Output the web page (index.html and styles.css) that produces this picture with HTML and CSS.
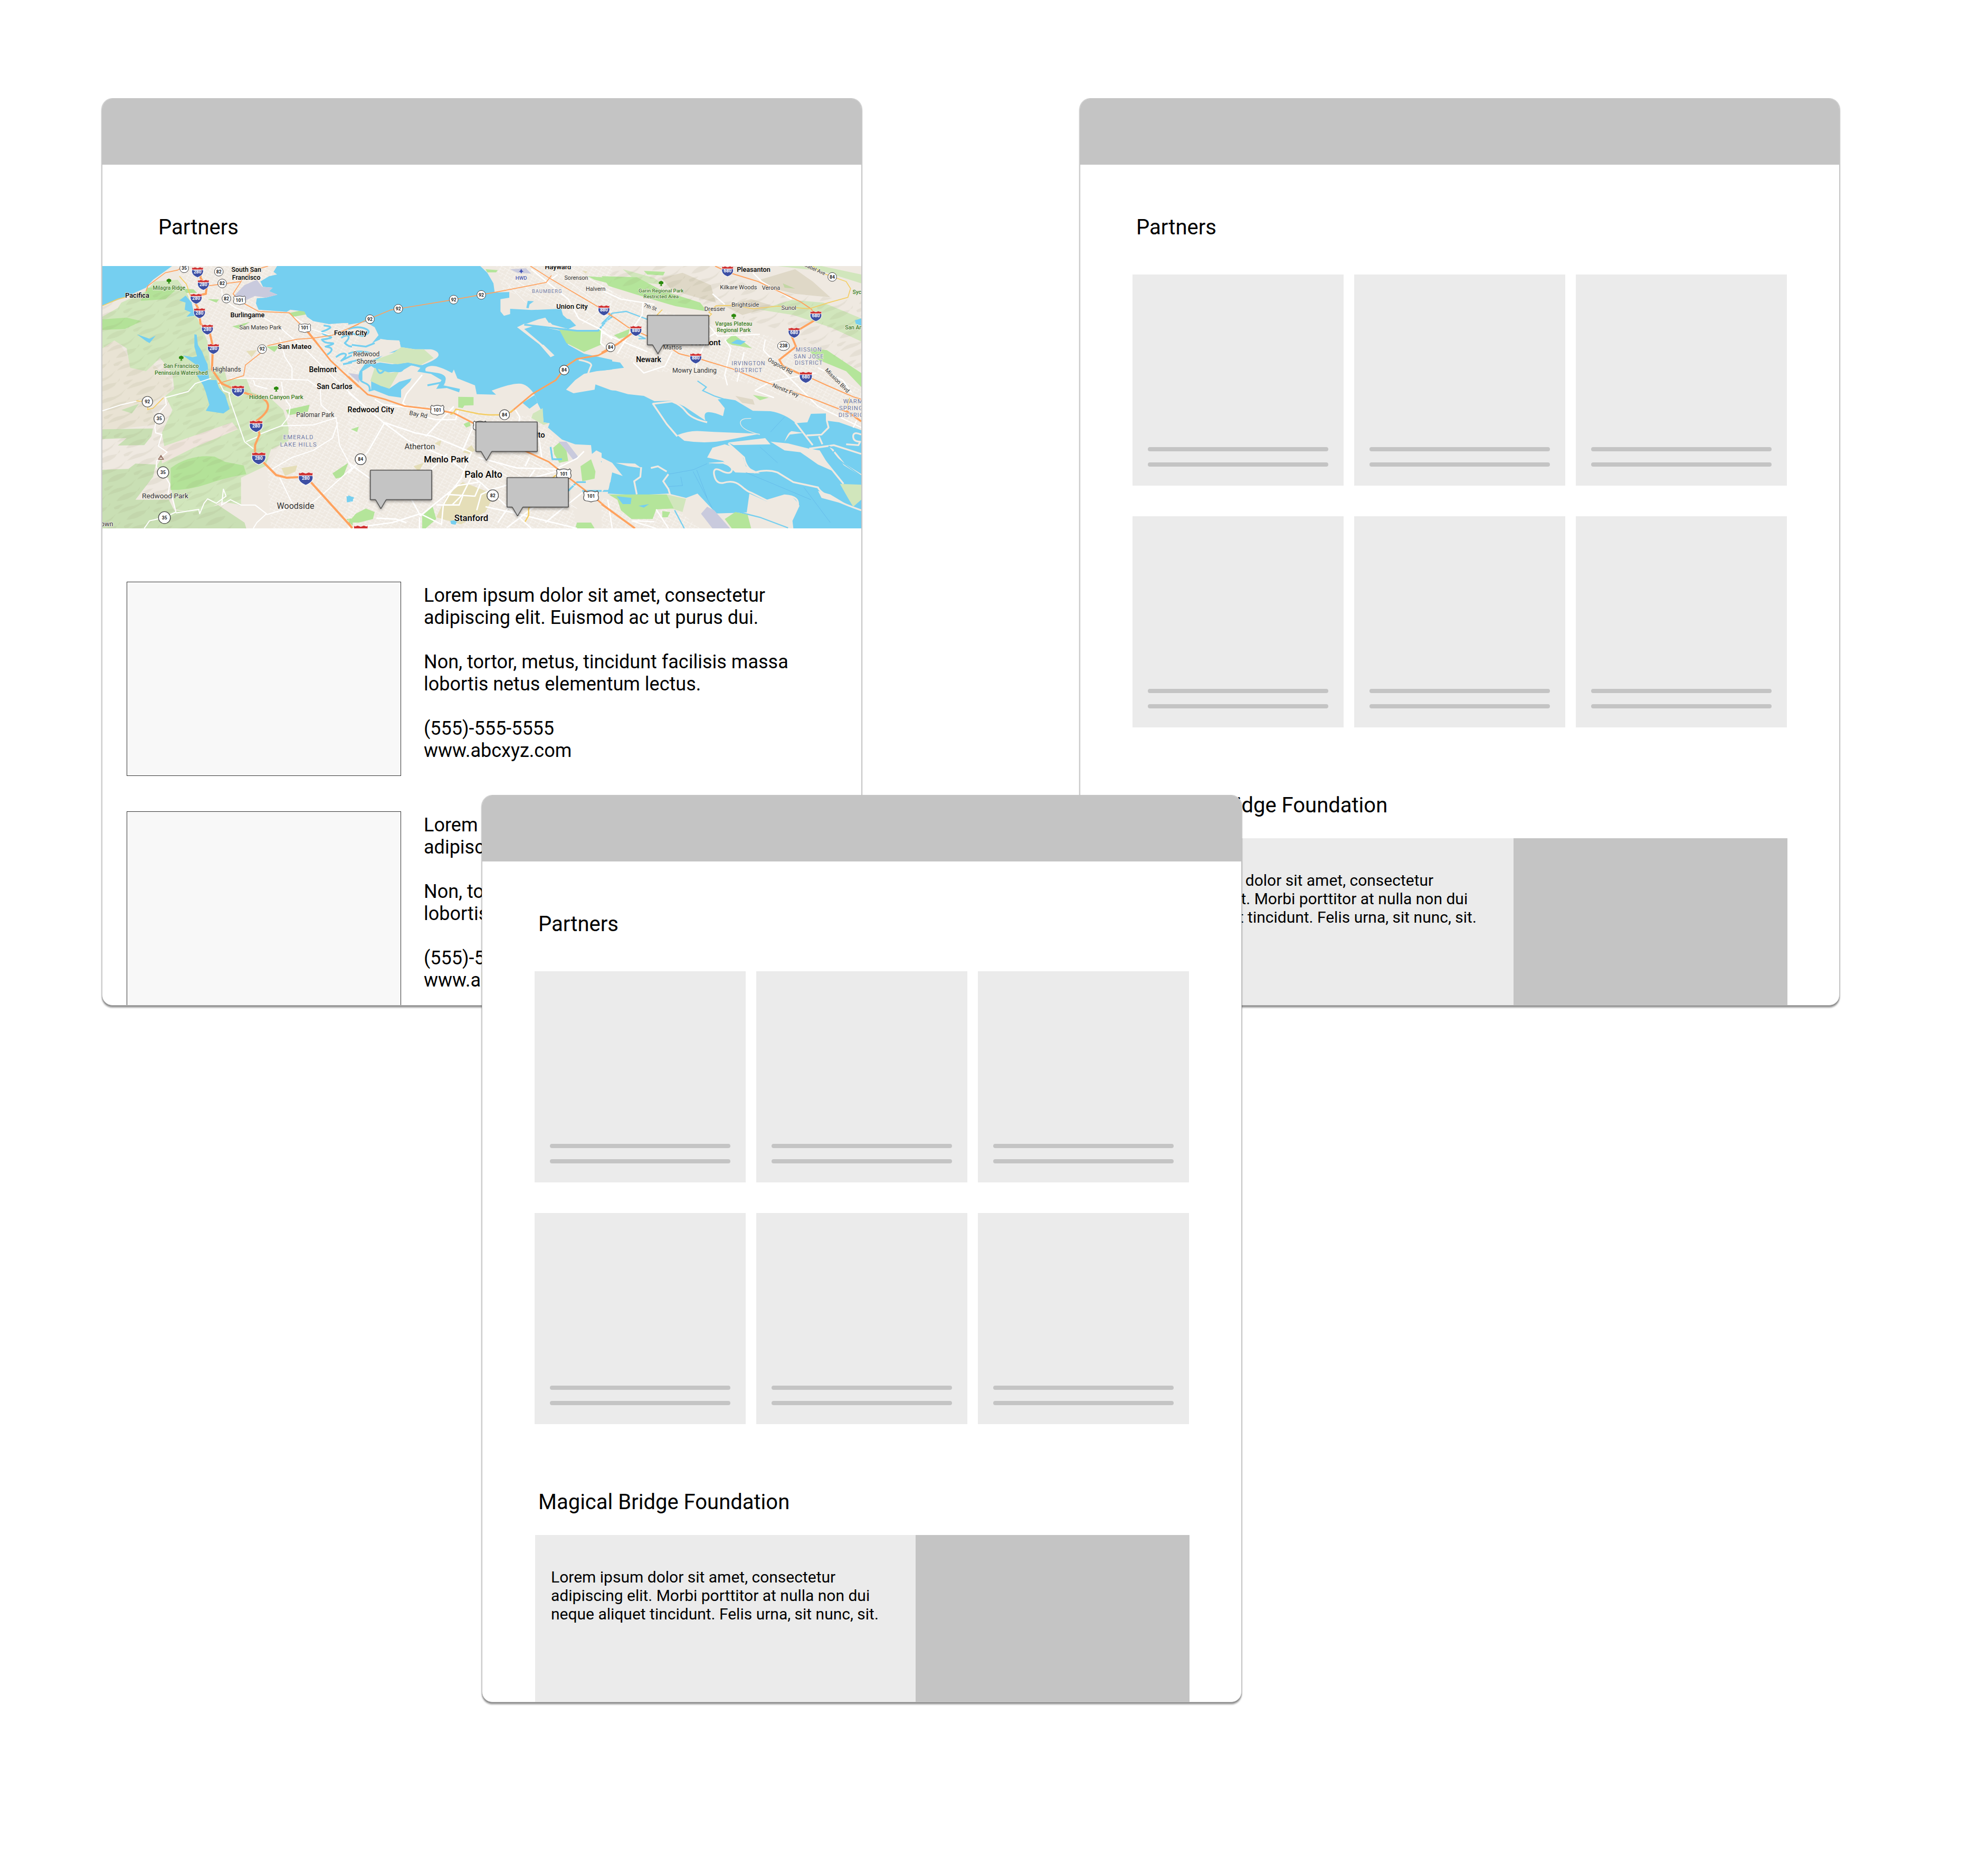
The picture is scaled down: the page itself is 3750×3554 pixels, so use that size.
FILE: index.html
```html
<!DOCTYPE html>
<html lang="en">
<head>
<meta charset="utf-8">
<title>Partners wireframes</title>
<link rel="stylesheet" href="styles.css">
</head>
<body>
<main class="canvas">

<article class="frame frame-map">
  <header class="bar"></header>
  <h1 class="title">Partners</h1>
  <svg class="map" viewBox="0 0 4314 1491" role="img" aria-label="Map of partner locations">
    <defs>
      <pattern id="streets" width="46" height="34" patternUnits="userSpaceOnUse" patternTransform="rotate(28)">
        <path d="M0 4H46M0 21H30M8 0V34M31 0V21" fill="none" stroke="#fff" stroke-width="2" opacity=".7"/>
      </pattern>
      <pattern id="hills" width="190" height="120" patternUnits="userSpaceOnUse" patternTransform="rotate(-28)">
        <path d="M0 20Q50 0 90 18T190 14L150 34Q90 42 50 30ZM30 74Q80 50 130 70T185 66L140 90Q80 98 30 74ZM-20 104Q20 90 60 108L20 118Z" fill="#8b8a62" opacity=".1"/>
      </pattern>
      <g id="interstate">
        <path d="M-32-9H32C37 12 22 27 0 35C-22 27-37 12-32-9Z" fill="#3d4fa3" stroke="#fff" stroke-width="3"/>
        <path d="M-32-9V-24L-26-20L-14-24L0-19L14-24L26-20L32-24V-9Z" fill="#cf3030" stroke="#fff" stroke-width="2"/>
      </g>
      <path id="us" d="M-28-24Q-20-16-12-22Q0-25 12-22Q20-16 28-24L34-16Q29-6 34 4Q36 18 24 21Q10 22 0 26Q-10 22-24 21Q-36 18-34 4Q-29-6-34-16Z" fill="#fff" stroke="#444" stroke-width="3"/>
      <circle id="state" r="25" fill="#fff" stroke="#444" stroke-width="3"/>
      <path id="tree" d="M-3 14V5Q-14 8-13-1Q-14-9-5-10Q0-16 6-10Q15-9 13 0Q14 8 4 5V14H7V16H-7V14Z" fill="#2b8a0d"/>
      <path id="callout" d="M0 0H349V168H90L60 219L30 168H0Z" fill="#c4c4c4" stroke="#000" stroke-width="3"/>
    </defs>
    <rect width="4314" height="1491" fill="#efe9e1"/>

    <g transform="translate(-42 -42)">
      <path fill="url(#streets)" d="M460 42H1010L1000 280L1240 350L1500 380V1540H1000L980 1200L1100 1000L1080 800L780 700L640 500L520 190Z"/>
      <path fill="#e9e3d4" d="M42 480L120 450L190 560L330 600L440 700L430 760L300 830L370 940L42 980Z"/>
      <path fill="#d1e6bc" d="M150 250L290 185L340 130L470 120L520 190L560 290L600 380L640 470L660 640L730 610L750 690L860 680L890 760L1000 795L1070 860L1100 960V1035L1000 1085L970 1178L830 1245L830 1400L720 1380L600 1450L460 1425L420 1250L350 1180L400 1100L380 990L440 860L400 780L450 740L440 650L370 565L290 640L200 620L180 510L110 465L42 510V330L130 280Z"/>
      <path fill="#efe4dc" d="M380 1070L780 930L812 970L560 1075L380 1165Z"/>
      <path fill="#c9dfb4" d="M42 970L330 965L320 1010L280 1060L130 1062L180 1020L42 1025ZM42 1200L190 1195L230 1165L345 1170L330 1240L230 1370H420L450 1430L560 1440L700 1400L850 1500L860 1533H42ZM150 860L250 825L210 880Z"/>
      <path fill="#b3e298" d="M430 1190Q540 1110 680 1125L740 1155L845 1175L860 1225Q740 1245 640 1280T430 1315ZM42 345L180 335L265 355L170 400L42 405ZM300 165L480 160L400 230L260 240ZM1100 310L1190 290L1210 315L1130 330ZM1350 1220L1440 1160L1410 1240L1370 1250ZM1085 860L1220 830L1210 870L1100 890ZM780 385L880 360L820 400ZM975 500L1050 495L1020 530ZM640 230L705 232L690 250ZM500 170L560 175L580 195L520 195ZM1430 1480L1465 1475V1520Z"/>
      <path fill="#e5deb8" d="M1060 1190L1150 1175L1140 1210L1080 1235ZM860 525L920 520L890 560ZM1020 380L1060 375L1040 390Z"/>
      <path fill="url(#hills)" d="M42 270L340 140L520 190L600 380L660 640L890 760L1080 870L1060 1060L960 1170L830 1245V1400L720 1450L860 1533H42Z"/>
      <path fill="#75cff0" d="M42 42H438L400 70L330 120L290 165L180 215L100 245L42 267ZM1461 42H1035L1015 75L1035 90L990 100L940 130L955 160L1010 165L990 185L1037 205L970 222L920 225L915 255L930 290L1090 302L1110 290L1190 300L1205 330L1240 355L1330 372L1410 366L1500 365V42Z"/>
      <path fill="#c9cadd" d="M850 150L920 120L950 160L1010 165L990 185L1037 205L970 222L910 212L850 240L790 212Z"/>
      <path fill="#75cff0" d="M480 238L515 210L550 250L558 290L565 325L520 330L545 305L510 290L515 250ZM565 430L578 432L585 490L610 530L625 570L640 600L645 650L650 690L690 690L705 735L740 775L765 855L730 880L665 870L630 865L650 830L630 760L615 720L580 665L595 640L570 600L500 550L555 560L580 555L565 500ZM238 430L310 455L345 437L310 480L285 465ZM1430 1350L1470 1355L1465 1380L1432 1385Z"/>
      <g fill="none" stroke="#75cff0" stroke-width="10" stroke-linejoin="round"><path d="M1300 380Q1350 385 1335 395T1290 415Q1290 430 1330 440T1290 460Q1300 480 1340 480T1310 500Q1350 505 1345 520T1320 545M1400 450Q1430 430 1440 440T1420 480Q1440 500 1461 500M1370 560Q1400 535 1420 540T1400 580L1461 550M1410 600L1461 590"/></g>
      <g fill="none" stroke="#fff" stroke-width="6" stroke-linejoin="round">
        <path d="M42 865L150 830L260 805M660 680L570 710L530 755L400 790L405 830L370 870L350 900M350 910L340 960L345 990L380 1000L360 1065L410 1100L350 1150L350 1190M400 1240L425 1280L415 1340L440 1360L460 1440L395 1470L310 1490L280 1533M460 1445L590 1425L595 1450L620 1390L640 1365L690 1390L745 1350L730 1310L720 1400L770 1370L830 1400L910 1400L975 1450L920 1500L900 1533M975 1455L1130 1410L1050 1245M760 760L770 810L850 1040L900 1080M700 690L730 750L770 765M930 1000L1060 950L1240 945L1370 905M1000 1200L1120 1130L1240 1090L1350 1020L1380 930M860 1040L930 1010M900 690L910 720L980 740M1060 700L1070 780L1110 840L1100 900L1060 950M1370 900L1390 1060L1460 1190L1300 1335L1230 1390M770 680L890 680L1060 685L1210 690L1280 740L1285 830L1370 910M1050 450L1080 560L1120 620V690M720 170L725 230L800 280L950 330L1050 390L1200 520L1340 660L1500 810M1130 330L1230 400L1350 440"/>
      </g>
      <g fill="none" stroke="#ffa25e" stroke-width="5"><path d="M290 185L300 155L400 80L470 65L505 42M640 155L830 130L785 200L820 240L930 300L1105 308L1200 410L1340 580L1500 730M700 710L845 665L855 605L950 530M980 495L1150 458L1240 452L1350 435L1500 372M830 125L905 65L985 42"/></g>
      <path d="M1200 400L1340 580L1500 730" fill="none" stroke="#ffa25e" stroke-width="9"/>
      <g fill="none" stroke="#ffa25e" stroke-width="12" stroke-linejoin="round"><path d="M600 60V110L635 160L630 200L550 215L590 290L600 370L650 410L670 500L665 630L720 710L810 750L890 775Q975 790 983 830T920 920L935 1000L910 1060V1110M940 1140L1030 1230L1090 1245L1200 1240L1465 1533"/></g>
      <path d="M480 100L520 145L545 220M42 268L130 230L170 220M235 808L300 812V858L330 850L390 790" fill="none" stroke="#f4cd62" stroke-width="5"/>
    </g>

    <g transform="translate(1398 -42)">
      <path fill="url(#streets)" d="M0 800L620 850L900 900L1060 890L1200 1050L1300 1533H0ZM840 42H1500V450L1290 330L1080 240L880 180Z"/>
      <path fill="#75cff0" d="M0 42H750L790 80L825 140L832 192L915 190V222L865 230V300L885 325L920 315V285L1040 292L1210 285L1220 320L1290 385L1200 405L1060 375L1000 370L960 390L1090 490L1165 550L1100 485L1000 400L1060 380L1210 410L1250 490L1340 540L1500 575V630L1410 640L1340 655L1290 690L1238 745L1280 765L1400 745L1405 715L1500 750V1155L1450 1110L1410 1090L1385 1110L1380 1060L1290 1055L1215 1028L1135 960L1145 935L1110 930L1105 880L1075 820L1060 775Q1020 710 970 710T815 750L840 773L730 770L720 720L620 680L600 630L590 650Q510 605 470 610T440 640L510 650Q560 660 553 690T540 720L635 740L630 760L560 735L500 740L530 690L470 655L380 640L350 700L300 745V790L230 780L130 740V690L70 690L65 640L100 590L200 550L310 505L470 515L515 545L490 580L420 605L500 550L300 510L290 465L180 460L135 480L172 435L150 390L100 360L60 365L0 375Z"/>
      <path fill="#efe9e1" d="M300 503L380 515L470 515Q515 525 513 548T420 605L340 590L250 600L180 590L130 600L210 540L270 530ZM80 640L130 610L190 650L300 640L360 605L410 620L360 680L290 700L230 740L140 695L80 695ZM960 390L1080 345L1120 335L1140 365L1200 350L1300 390L1200 400L1050 375L985 405ZM1085 485L1110 490L1172 550L1150 560ZM180 455L295 475L280 500L200 495Z"/>
      <path fill="#d1e6bc" d="M300 503L380 515H430L485 565L410 605L340 590L280 600L140 580L250 540ZM150 620L240 650L290 640L230 745L125 695ZM1050 880L1105 850L1110 930L1140 935L1110 945L1040 905Z"/>
      <path fill="#b4e59a" d="M1200 405L1440 405L1435 490L1340 530L1240 480ZM625 785L712 787V833L660 835L650 850L625 845ZM1165 1075L1200 1045L1240 1090L1250 1150L1200 1160L1170 1110ZM1320 1180L1380 1140L1405 1210L1400 1250L1330 1265ZM420 1460L480 1410L500 1480L440 1533H420ZM42 1450L100 1420L150 1440L140 1480L60 1500H0ZM780 60L850 65L840 78H790ZM1360 100L1500 110V145L1400 120ZM655 940L690 925L695 950L670 960ZM15 970L60 955L50 985ZM1300 1500L1380 1500L1400 1533H1290Z"/>
      <path fill="#e5deb8" d="M650 1100L700 1060L720 1090L690 1110ZM560 1350L650 1270L780 1320L820 1360L780 1440L640 1510L500 1470ZM370 1180L430 1160L400 1210ZM490 1050L530 1030L520 1065ZM1330 70L1360 72L1350 85Z"/>
      <path fill="#c9cadd" d="M0 650L70 660L60 705ZM1195 1040L1240 1040L1310 1130L1280 1145L1230 1080ZM920 60L1010 55L1040 85L960 80Z"/>
      <path fill="#75cff0" d="M990 820L1060 775L1075 820L1030 853ZM580 1490L620 1485L610 1512L585 1508ZM0 1345L35 1360L0 1385ZM1020 240L1055 242L1030 260L1025 282L1012 280ZM1130 345L1170 355L1200 332L1260 345L1295 380L1250 400L1160 375Z"/>
      <g fill="none" stroke="#75cff0" stroke-width="10" stroke-linejoin="round"><path d="M0 400Q60 380 100 400T80 440L0 420M20 490L100 500L150 480M0 540Q60 515 140 540M0 590L80 570M70 640Q50 690 90 705T120 750L190 730L250 750M160 615Q170 655 185 650T210 625Q290 650 305 635T290 610Q350 590 430 620M550 700L450 720M1150 1070L1160 1140L1215 1140M1440 1150L1480 1210L1500 1240M1330 1320L1480 1320L1500 1280M1250 1320L1300 1270L1350 1270M1500 330L1470 350L1420 410L1300 410L1000 375"/></g>
      <path d="M1310 575Q1390 590 1380 610T1360 665L1420 675" fill="none" stroke="#efe9e1" stroke-width="10"/>
      <g fill="none" stroke="#fff" stroke-width="8" stroke-linejoin="round">
        <path d="M0 760L205 935L340 1035L560 1130L760 1280L960 1460L1040 1533M205 935L110 1100L0 1220M0 1160L180 1290L360 1370L410 1460L620 1290L740 1270M405 1470L405 1533M0 1533L250 1500L410 1450L530 1510L540 1400L580 1330L640 1250L700 1100L480 1010L380 990L200 930M420 660L330 770L310 820L330 840M150 800L200 830L480 860M350 880L500 915L610 915L625 860M950 860L975 900L970 930M1080 1000L1100 1130M740 1130L960 1190L1180 1195L1300 1135L1340 1095M560 1340L720 1350L750 1280M590 1400L650 1340L700 1240M500 1400L630 1400L650 1350M730 1430L755 1340L820 1310L1180 1210M780 1410L920 1440L1300 1533M850 1500L1060 1200M900 1530L1200 1300M1120 1500L1330 1330M1040 60L1140 140L1250 230L1310 340L1430 400L1500 455M1440 410L1435 480L1480 520M1150 120L1190 90M340 1350L480 1190L560 1110M440 1010L600 840M650 1090L720 930M160 1475L270 1480L330 1500M1005 1180L1030 1130"/>
      </g>
      <g fill="none" stroke="#fff" stroke-width="3"><path d="M950 120L1100 230M900 140L1010 250M1160 60L1400 240M1250 42L1500 190M1330 370L1500 250M1350 300L1480 420M760 1150L1000 1300M800 1180L1200 1400M830 1150L1300 1420M700 1000L1000 1140M1040 1150L1300 1300"/></g>
      <path d="M0 398L100 350L240 292L600 233L840 190L1125 135L1155 95M1035 42L1145 112L1430 280L1500 320" fill="none" stroke="#ffa25e" stroke-width="5"/>
      <path d="M0 670L110 772L210 800L320 838L510 860L600 878L740 950L900 1040L1020 1100L1140 1155L1220 1220L1390 1350L1500 1440M920 875L1045 770L1180 690L1240 610L1300 570L1420 550L1500 510" fill="none" stroke="#ffa25e" stroke-width="9"/>
      <path d="M580 885L595 880L612 855L740 882L800 888H900L940 857M1180 1230L1100 1300L1025 1420V1460L1005 1495" fill="none" stroke="#f4cd62" stroke-width="7"/>
      <path d="M0 1500L22 1533" stroke="#ffa25e" stroke-width="12"/>
    </g>

    <g transform="translate(2838 -42)">
      <path fill="url(#streets)" d="M0 150L200 250L610 370L960 440L1476 750V960L1250 860L800 700L300 640L100 560L0 500ZM0 1360L450 1440L560 1533H0Z"/>
      <path fill="#d1e6bc" d="M1080 235L1260 250L1476 340V470L1300 390L1090 320L900 290ZM120 60L300 110L350 150L200 130ZM1000 42L1250 42L1476 90V140L1250 70Z"/>
      <path fill="#b4e59a" d="M0 100L200 105L340 180L560 250L600 300L420 270L200 205L40 155ZM700 470L750 430L855 510L740 490ZM1170 510L1280 520L1476 650V730L1390 640L1220 570ZM70 435L160 400L150 440L100 455ZM1030 140L1100 170L1040 165ZM240 70L360 75L350 95L260 90ZM860 775L950 790L900 805Z"/>
      <path fill="#cfc8ae" opacity=".5" d="M340 110L460 80L620 150L650 250L540 220L400 180ZM900 120L1100 60L1200 130L1300 220L1100 200L980 170ZM700 270L850 230L980 270L800 320ZM760 780L860 800L870 830L800 820Z"/>
      <path fill="url(#hills)" d="M100 42H640L880 180L1476 240V640L1090 430L650 290L380 240L0 130Z"/>
      <path fill="#75cff0" d="M0 575L105 590L127 620L0 637ZM0 745L80 750L150 770L240 780L300 810L400 808L470 840L590 920Q575 870 610 872T690 895L700 850L660 800L700 795L760 805L860 865L960 867Q1040 880 1105 935L1170 930L1190 882L1275 880V920L1350 930L1476 975V1533H1090L1085 1490L1125 1405Q1090 1340 1040 1345T940 1380L840 1335L825 1442L650 1445L545 1335L480 1360L380 1335L200 1345L35 1335L50 1260L0 1210ZM735 480L770 460L820 470L790 490ZM1440 350L1476 340V380L1445 370Z"/>
      <g fill="#efe9e1">
        <path d="M430 1003Q500 975 560 980L640 985L900 995L720 1030Q600 1055 470 1035ZM600 1130L630 1075L700 1055L730 1065L800 1120L820 1180L900 1220L760 1215L690 1150ZM960 1040L1040 1090L1130 1100L1230 1170L1310 1205L1240 1090L1180 1080L1060 1050ZM1040 1040Q1060 985 1080 980L1150 990L1070 1000ZM720 1045L930 1020L960 1055L750 1060ZM0 1130L60 1160L120 1235L60 1215L50 1270L0 1330ZM80 1160L190 1165L225 1190L150 1180ZM1230 1320L1300 1340L1400 1400L1250 1360Z"/>
      </g>
      <g fill="none" stroke="#efe9e1" stroke-width="10" stroke-linejoin="round">
        <path d="M290 822L370 940L430 1010M290 825L400 812Q450 830 480 870T600 930M720 1050L810 1130Q820 1190 870 1215Q940 1195 1000 1215L1090 1270L1230 1300Q1250 1350 1476 1430M610 1165L690 1160Q750 1180 740 1205T680 1205T640 1230T690 1275Q750 1255 790 1290T850 1330L940 1375L1040 1345Q1130 1350 1115 1410M225 1185L220 1240L185 1265L200 1340M380 1225L350 1265L380 1310L415 1430M370 1210L320 1180L280 1190M1100 930L1200 1060M1165 1005L1250 1000L1290 960L1280 920M1235 1010L1255 1055M1180 1080L1320 1060L1476 1110M1270 1150L1375 1280M1300 1070L1380 1170L1476 1230M1476 1000Q1430 980 1430 1010T1470 1040L1460 1060L1390 1055"/>
      </g>
      <g fill="none" stroke="#75cff0" stroke-width="7">
        <path d="M545 695L595 730L575 750L640 780L700 800M600 1165L690 1170L730 1200M1290 1065L1330 1085L1310 1110L1370 1160L1476 1235M415 1430L470 1533M650 1445L780 1440L900 1470L1060 1530M0 370L60 310L140 300L260 345M205 435L250 455L210 455"/>
      </g>
      <path fill="none" stroke="#5fb4e8" stroke-width="2" d="M380 1225L520 1200L600 1165M520 1210L630 1420M540 1200L600 1360M820 1215L1190 1370M900 1070L1000 1160M1040 900L960 985M450 1240L460 1290L380 1295M1150 1300L1300 1500"/>
      <path d="M850 908Q780 905 790 940T900 1000" fill="none" stroke="#efe9e1" stroke-width="4"/>
      <path fill="#d1e6bc" d="M1355 1280L1476 1285V1370L1430 1410L1400 1360ZM370 1340L480 1365L460 1440L400 1420Z"/>
      <path fill="#b4e59a" d="M40 1340H370L410 1420L310 1425L290 1480L170 1480L110 1430L90 1370ZM700 1480L760 1440L830 1455L850 1533H740ZM345 1435L390 1440L375 1470H345Z"/>
      <path fill="#75cff0" d="M85 1350L170 1360L165 1395L120 1395ZM210 1405L270 1395L240 1415Z"/>
      <path fill="#c9cadd" d="M565 1450L600 1410L640 1430L730 1533H630Z"/>
      <g fill="none" stroke="#fff" stroke-width="7" stroke-linejoin="round"><path d="M235 250L230 320L180 390L90 540M540 570V620M550 570L600 450L720 380M700 460L735 510L700 660L715 720M810 530L770 700M870 750L960 700L1110 670L1220 650M870 750L980 790M930 460L920 520L1060 670L1230 840L1476 960M1230 620L1370 690L1420 760M400 530L360 610L240 650L180 590M610 380L660 440L900 430M310 1533L170 1490M310 1425L380 1533M35 1370L60 1533M180 1490L300 1495M0 420L70 450L260 530M0 180L110 230L300 260M860 80L910 130L1080 230M1450 920L1430 960M630 200L700 260"/></g>
      <g fill="none" stroke="#ffa25e" stroke-width="6"><path d="M0 290L80 340L150 390L260 440M380 500L440 540L540 565L740 625L900 690L1210 800L1390 870M1160 665L1280 720L1430 785L1476 800M645 42L720 78L890 130L1130 245L1190 285L1210 310"/></g>
      <g fill="none" stroke="#ffa25e" stroke-width="11"><path d="M0 535L90 485L170 425M1220 345L1120 405M1080 440L1105 500L1010 575L1030 610L1160 670M1390 865L1476 925M0 1395L190 1533"/></g>
      <path d="M315 320L345 290M610 330L625 315L610 305L650 268L760 265L860 285L1000 270L1180 285L1290 250L1400 220L1415 170L1390 130L1250 80L1200 42M1410 790L1395 850" fill="none" stroke="#f4cd62" stroke-width="5"/>
    </g>

    <!-- West side labels -->
    <g transform="translate(-42 -42)">
      <g class="town">
        <text x="860" y="74" font-size="37">South San</text><text x="860" y="120" font-size="37">Francisco</text>
        <text x="240" y="223" font-size="38">Pacifica</text><text x="867" y="333" font-size="38">Burlingame</text>
        <text x="1135" y="513" font-size="40">San Mateo</text><text x="1295" y="645" font-size="42">Belmont</text>
        <text x="1362" y="740" font-size="42">San Carlos</text><text x="1568" y="873" font-size="43">Redwood City</text>
        <text x="1453" y="435" font-size="39">Foster City</text>
      </g>
      <g class="place">
        <text x="940" y="402" font-size="34">San Mateo Park</text><text x="749" y="642" font-size="36">Highlands</text>
        <text x="1252" y="901" font-size="36">Palomar Park</text><text x="399" y="1362" font-size="41">Redwood Park</text>
        <text x="1140" y="1423" font-size="48">Woodside</text><text x="68" y="1522" font-size="38">own</text>
        <text x="1543" y="555" font-size="36">Redwood</text><text x="1543" y="598" font-size="36">Shores</text>
      </g>
      <g class="park">
        <text x="421" y="177" font-size="30">Milagra Ridge</text><text x="490" y="620" font-size="32">San Francisco</text>
        <text x="490" y="660" font-size="32">Peninsula Watershed</text><text x="1030" y="797" font-size="34">Hidden Canyon Park</text>
      </g>
      <g class="area"><text x="1157" y="1027" font-size="34">EMERALD</text><text x="1157" y="1067" font-size="34">LAKE HILLS</text></g>
      <use href="#tree" x="420" y="126"/><use href="#tree" x="490" y="564"/><use href="#tree" x="1030" y="739"/>
      <path d="M361 1140L375 1118L389 1140ZM369 1128H381" fill="#efe9e1" stroke="#83574a" stroke-width="4"/>
      <use href="#interstate" x="583" y="72"/><use href="#interstate" x="616" y="144"/><use href="#interstate" x="575" y="223"/>
      <use href="#interstate" x="594" y="305"/><use href="#interstate" x="639" y="398"/><use href="#interstate" x="673" y="508"/>
      <use href="#interstate" transform="translate(813 747) scale(1.1)"/><use href="#interstate" transform="translate(916 947) scale(1.15)"/>
      <use href="#interstate" transform="translate(931 1129) scale(1.2)"/><use href="#interstate" transform="translate(1198 1244) scale(1.25)"/>
      <use href="#interstate" transform="translate(1511 1546) scale(1.25)"/>
      <use href="#state" x="507" y="55"/><use href="#state" x="704" y="74"/><use href="#state" x="723" y="141"/><use href="#state" x="747" y="227"/>
      <use href="#state" x="950" y="514"/><use href="#state" transform="translate(298 813) scale(1.2)"/><use href="#state" transform="translate(365 910) scale(1.2)"/>
      <use href="#state" transform="translate(387 1215) scale(1.3)"/><use href="#state" transform="translate(395 1472) scale(1.35)"/>
      <use href="#us" x="822" y="236"/><use href="#us" x="1192" y="394"/>
      <g class="badge light">
        <text x="583" y="84">280</text><text x="616" y="156">280</text><text x="575" y="235">280</text><text x="594" y="317">280</text>
        <text x="639" y="411">280</text><text x="673" y="520">280</text><text x="813" y="760">280</text><text x="916" y="960">280</text>
        <text x="931" y="1143">280</text><text x="1198" y="1258">280</text>
      </g>
      <g class="badge">
        <text x="507" y="64">35</text><text x="704" y="83">82</text><text x="723" y="150">82</text><text x="747" y="236">82</text>
        <text x="950" y="523">92</text><text x="298" y="822">92</text><text x="365" y="919">35</text><text x="387" y="1224">35</text>
        <text x="395" y="1481">35</text><text x="822" y="246">101</text><text x="1192" y="403">101</text>
      </g>
    </g>

    <!-- Bay and peninsula labels -->
    <g transform="translate(1398 -42)">
      <g class="town">
        <text x="1192" y="60" font-size="38">Hayward</text><text x="1272" y="286" font-size="39">Union City</text>
        <text x="557" y="1158" font-size="50">Menlo Park</text><text x="768" y="1244" font-size="53">Palo Alto</text>
        <text x="699" y="1490" font-size="50">Stanford</text><text x="980" y="1016" font-size="44">East Palo Alto</text>
      </g>
      <g class="place">
        <text x="1296" y="121" font-size="32">Sorenson</text><text x="1406" y="183" font-size="33">Halvern</text>
        <text x="406" y="1083" font-size="45">Atherton</text><text x="0" y="0" font-size="34" transform="translate(396 897) rotate(11)">Bay Rd</text>
      </g>
      <text class="area" x="1130" y="195" font-size="28">BAUMBERG</text>
      <text class="airport" x="983" y="119">HWD</text>
      <path d="M983 57L987 67L996 74L987 75L985 83L981 83L979 75L970 74L979 67Z" fill="#3d4fb3"/>
      <use href="#state" x="123" y="344"/><use href="#state" x="284" y="285"/><use href="#state" x="599" y="233"/><use href="#state" x="756" y="206"/>
      <use href="#state" transform="translate(888 887) scale(1.15)"/><use href="#state" transform="translate(1227 633) scale(1.1)"/>
      <use href="#state" x="1491" y="504"/><use href="#state" transform="translate(70 1140) scale(1.25)"/><use href="#state" transform="translate(821 1346) scale(1.3)"/>
      <use href="#interstate" x="1453" y="289"/>
      <use href="#us" transform="translate(506 860) scale(1.12)"/><use href="#us" transform="translate(748 950) scale(1.12)"/>
      <use href="#us" transform="translate(1225 1224) scale(1.22)"/><use href="#us" transform="translate(1380 1350) scale(1.25)"/>
      <text class="badge light" x="1453" y="300">880</text>
      <g class="badge">
        <text x="123" y="353">92</text><text x="284" y="294">92</text><text x="599" y="242">92</text><text x="756" y="215">92</text>
        <text x="888" y="896">84</text><text x="1227" y="642">84</text><text x="1491" y="513">84</text><text x="70" y="1149">84</text>
        <text x="821" y="1355">82</text><text x="506" y="869">101</text><text x="1225" y="1233">101</text><text x="1380" y="1359">101</text>
      </g>
    </g>

    <!-- East side labels -->
    <g transform="translate(2838 -42)">
      <g class="town">
        <text x="864" y="75" font-size="38">Pleasanton</text><text x="267" y="589" font-size="42">Newark</text><text x="592" y="493" font-size="45">Fremont</text>
      </g>
      <g class="place">
        <text x="778" y="173" font-size="33">Kilkare Woods</text><text x="963" y="178" font-size="33">Verona</text>
        <text x="817" y="272" font-size="35">Brightside</text><text x="643" y="297" font-size="35">Dresser</text>
        <text x="1064" y="290" font-size="34">Sunol</text><text x="403" y="515" font-size="34">Mattos</text>
        <text x="528" y="649" font-size="37">Mowry Landing</text>
        <text font-size="29" transform="translate(273 285) rotate(18)">7th St</text>
        <text font-size="29" transform="translate(1206 68) rotate(24)">Isabel Ave</text>
        <text font-size="32" transform="translate(1010 619) rotate(30)">Osgood Rd</text>
        <text font-size="32" transform="translate(1042 758) rotate(22)">Nimitz Fwy</text>
        <text font-size="32" transform="translate(1332 700) rotate(45)">Mission Blvd</text>
      </g>
      <g class="park">
        <text x="338" y="191" font-size="29">Garin Regional Park</text><text x="338" y="226" font-size="29">Restricted Area</text>
        <text x="751" y="381" font-size="31">Vargas Plateau</text><text x="751" y="418" font-size="31">Regional Park</text>
        <text x="1496" y="201" font-size="31">Sycamore</text><text x="1468" y="402" font-size="31">San Antonio</text>
      </g>
      <g class="area">
        <text x="1178" y="529" font-size="32">MISSION</text><text x="1178" y="567" font-size="32">SAN JOSE</text><text x="1178" y="604" font-size="32">DISTRICT</text>
        <text x="835" y="606" font-size="32">IRVINGTON</text><text x="835" y="644" font-size="32">DISTRICT</text>
        <text x="1430" y="821" font-size="34">WARM</text><text x="1430" y="861" font-size="34">SPRINGS</text><text x="1430" y="901" font-size="34">DISTRICT</text>
      </g>
      <use href="#tree" x="338" y="139"/><use href="#tree" x="751" y="326"/>
      <use href="#interstate" x="13" y="289"/><use href="#interstate" x="195" y="406"/><use href="#interstate" x="535" y="562"/>
      <use href="#interstate" x="716" y="67"/><use href="#interstate" x="1218" y="322"/><use href="#interstate" x="1094" y="416"/>
      <use href="#interstate" transform="translate(1161 669) scale(1.1)"/>
      <use href="#state" x="1311" y="104"/><use href="#state" x="51" y="504"/>
      <ellipse cx="1034" cy="496" rx="34" ry="26" fill="#fff" stroke="#444" stroke-width="3"/>
      <g class="badge light">
        <text x="13" y="299">880</text><text x="195" y="417">880</text><text x="535" y="574">880</text><text x="716" y="79">680</text>
        <text x="1218" y="333">680</text><text x="1094" y="428">680</text><text x="1161" y="682">680</text>
      </g>
      <g class="badge"><text x="1311" y="113">84</text><text x="51" y="513">84</text><text x="1034" y="505">238</text></g>
    </g>

    <g class="callouts">
      <use href="#callout" x="2123" y="886"/><use href="#callout" x="1523" y="1160"/>
      <use href="#callout" x="2300" y="1202"/><use href="#callout" x="3098" y="280"/>
    </g>
  </svg>

  <div class="listing">
    <section class="partner">
      <div class="photo"></div>
      <div class="details">
        <p>Lorem ipsum dolor sit amet, consectetur adipiscing elit. Euismod ac ut purus dui.</p>
        <p>Non, tortor, metus, tincidunt facilisis massa lobortis netus elementum lectus.</p>
        <p>(555)-555-5555<br>www.abcxyz.com</p>
      </div>
    </section>
    <section class="partner">
      <div class="photo"></div>
      <div class="details">
        <p>Lorem ipsum dolor sit amet, consectetur adipiscing elit. Euismod ac ut purus dui.</p>
        <p>Non, tortor, metus, tincidunt facilisis massa lobortis netus elementum lectus.</p>
        <p>(555)-555-5555<br>www.abcxyz.com</p>
      </div>
    </section>
  </div>
</article>

<article class="frame frame-back">
  <header class="bar"></header>
  <h1 class="title">Partners</h1>
  <div class="tiles">
    <div class="tile"><i></i><i></i></div><div class="tile"><i></i><i></i></div><div class="tile"><i></i><i></i></div>
    <div class="tile"><i></i><i></i></div><div class="tile"><i></i><i></i></div><div class="tile"><i></i><i></i></div>
  </div>
  <h2 class="title feature-title">Magical Bridge Foundation</h2>
  <section class="feature">
    <p class="feature-text">Lorem ipsum dolor sit amet, consectetur adipiscing elit. Morbi porttitor at nulla non dui neque aliquet tincidunt. Felis urna, sit nunc, sit.</p>
    <div class="feature-image"></div>
  </section>
</article>

<article class="frame frame-front">
  <header class="bar"></header>
  <h1 class="title">Partners</h1>
  <div class="tiles">
    <div class="tile"><i></i><i></i></div><div class="tile"><i></i><i></i></div><div class="tile"><i></i><i></i></div>
    <div class="tile"><i></i><i></i></div><div class="tile"><i></i><i></i></div><div class="tile"><i></i><i></i></div>
  </div>
  <h2 class="title feature-title">Magical Bridge Foundation</h2>
  <section class="feature">
    <p class="feature-text">Lorem ipsum dolor sit amet, consectetur adipiscing elit. Morbi porttitor at nulla non dui neque aliquet tincidunt. Felis urna, sit nunc, sit.</p>
    <div class="feature-image"></div>
  </section>
</article>

</main>
</body>
</html>
```
FILE: styles.css
```css
* { box-sizing: border-box; }

body {
  margin: 0;
  background: #fff;
  color: #000;
  font-family: Roboto, "Liberation Sans", sans-serif;
}

h1, h2, p { margin: 0; font-weight: 400; }

/* Three overlapping frames share one column/row grid */
.canvas {
  display: grid;
  grid-template-columns: 193fr 720fr 720fr 413fr 307fr 1133fr 264fr;
  grid-template-rows: 1320px 399px 1320px;
  padding: 186px 0 329px;
}

.frame {
  display: flex;
  flex-direction: column;
  min-width: 0;
  min-height: 0;
  overflow: hidden;
  background: #fff;
  border: 1px solid #c4c4c4;
  border-radius: 20px;
  box-shadow: 0 1px 2px rgba(0, 0, 0, .3), 0 4px 3px rgba(0, 0, 0, .35);
}
.frame-map { grid-column: 2 / 4; grid-row: 1 / 3; }
.frame-back { grid-column: 5 / 7; grid-row: 1 / 3; }
.frame-front { grid-column: 3 / 6; grid-row: 2 / 4; z-index: 1; }

.frame > * { flex-shrink: 0; }

.bar { height: 125px; background: #c4c4c4; }

.title {
  padding: 95px 106px 0;
  font-size: 40px;
  line-height: 47px;
}

/* Map frame */
.map { display: block; width: 100%; margin-top: 50px; }
.map text {
  text-anchor: middle;
  paint-order: stroke;
  stroke: #f5f1ea;
  stroke-width: 5px;
  stroke-linejoin: round;
}
.map .town { font-weight: 500; fill: #000; }
.map .place { fill: #333; }
.map .park { font-weight: 500; fill: #3b7d23; }
.map .area { fill: #6d77a3; letter-spacing: 3px; }
.map .airport { font-size: 29px; font-weight: 500; fill: #4a58b0; }
.map .badge { font-size: 26px; font-weight: 700; fill: #222; }
.map .badge text, .map text.badge { stroke: none; }
.map .light { fill: #fff; }
.callouts { filter: drop-shadow(0 10px 6px rgba(0, 0, 0, .3)); }

.listing {
  display: flex;
  flex-direction: column;
  gap: 67px;
  padding: 101px 46px 0;
}
.partner { display: flex; gap: 43px; }
.photo {
  flex: 0 0 520px;
  height: 368px;
  background: #f8f8f8;
  border: 1px solid #333;
}
.details {
  display: flex;
  flex-direction: column;
  gap: 42px;
  max-width: 720px;
  padding-top: 5px;
  font-size: 36px;
  line-height: 42px;
}

/* Tile frames */
.tiles {
  display: grid;
  grid-template-columns: repeat(3, 1fr);
  gap: 58px 20px;
  padding: 66px 99px 0;
}
.tile {
  display: flex;
  flex-direction: column;
  justify-content: flex-end;
  gap: 21px;
  height: 400px;
  padding: 0 29px 36px;
  background: #ebebeb;
}
.tile i { height: 8px; border-radius: 4px; background: #c4c4c4; }

.feature-title { padding-top: 124px; }

.feature {
  display: grid;
  grid-template-columns: 721fr 519fr;
  min-height: 340px;
  margin: 39px 98px 0 100px;
  background: #ebebeb;
}
.feature-text {
  padding: 62px 60px 62px 30px;
  font-size: 30px;
  line-height: 35px;
}
.feature-image { background: #c4c4c4; }
```
